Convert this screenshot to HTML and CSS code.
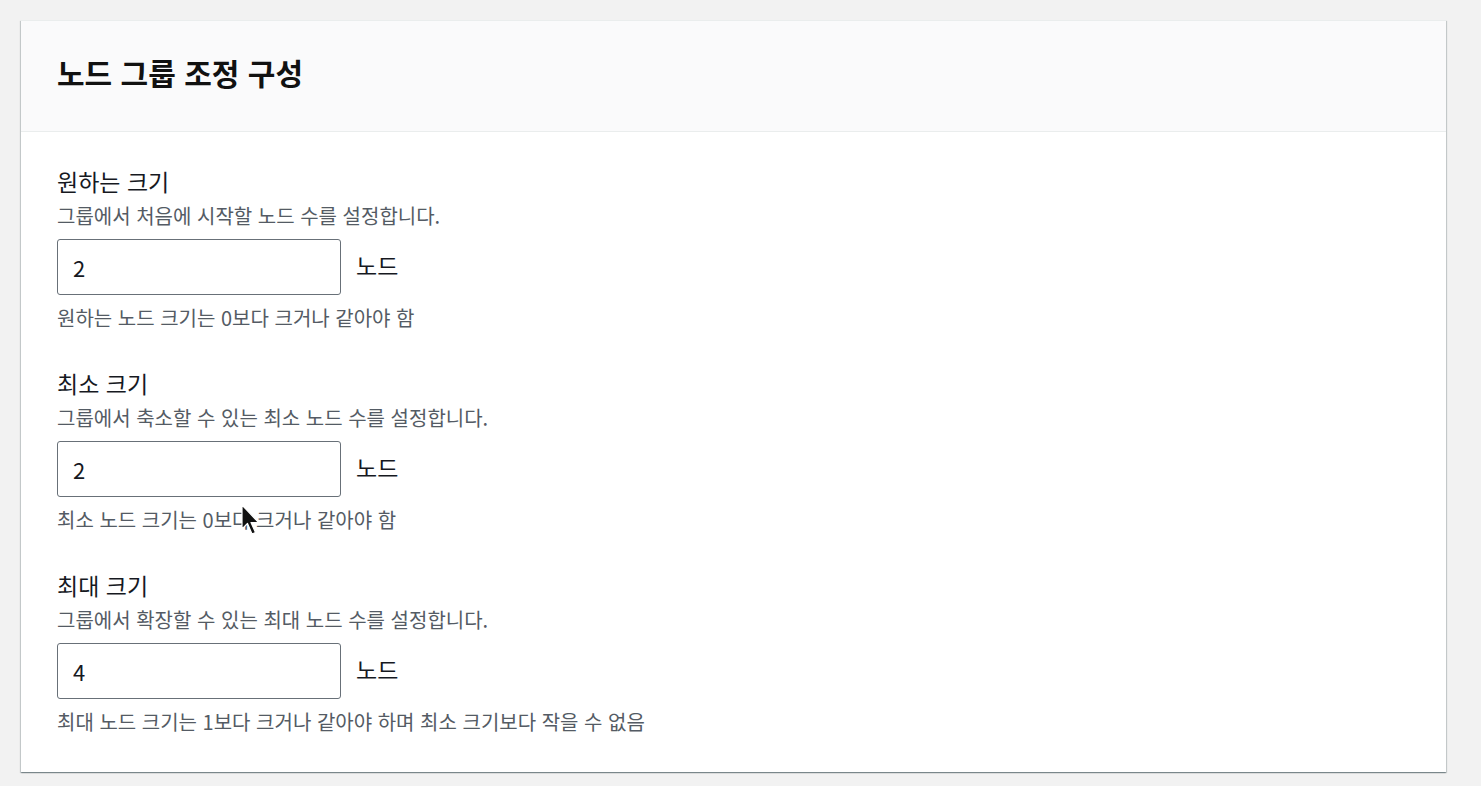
FILE: index.html
```html
<!DOCTYPE html>
<html lang="ko">
<head>
<meta charset="utf-8">
<link rel="stylesheet" href="styles.css">
<title>노드 그룹 조정 구성</title>
</head>
<body>
<div class="page">
  <section class="card">
    <header class="card-header">
      <h2 class="card-title">노드 그룹 조정 구성</h2>
    </header>
    <div class="card-body">
      <div class="field">
        <div class="label">원하는 크기</div>
        <div class="desc">그룹에서 처음에 시작할 노드 수를 설정합니다.</div>
        <div class="control">
          <input class="input" type="text" value="2">
          <span class="unit">노드</span>
        </div>
        <div class="hint">원하는 노드 크기는 0보다 크거나 같아야 함</div>
      </div>
      <div class="field">
        <div class="label">최소 크기</div>
        <div class="desc">그룹에서 축소할 수 있는 최소 노드 수를 설정합니다.</div>
        <div class="control">
          <input class="input" type="text" value="2">
          <span class="unit">노드</span>
        </div>
        <div class="hint">최소 노드 크기는 0보다 크거나 같아야 함</div>
      </div>
      <div class="field">
        <div class="label">최대 크기</div>
        <div class="desc">그룹에서 확장할 수 있는 최대 노드 수를 설정합니다.</div>
        <div class="control">
          <input class="input" type="text" value="4">
          <span class="unit">노드</span>
        </div>
        <div class="hint">최대 노드 크기는 1보다 크거나 같아야 하며 최소 크기보다 작을 수 없음</div>
      </div>
    </div>
  </section>
  <svg class="cursor" width="20" height="34" viewBox="0 0 20 34" aria-hidden="true">
    <path d="M1 1 L1 25 L6.5 19.5 L11 30 L14.5 28.5 L10 18.5 L17.5 18.5 Z" fill="#111" stroke="#fff" stroke-width="1.2" stroke-linejoin="round"/>
  </svg>
</div>
</body>
</html>
```

FILE: styles.css
```css
* { box-sizing: border-box; }
html, body { margin: 0; padding: 0; }
body {
  background: #f2f2f2;
  font-family: "Noto Sans CJK KR", "Noto Sans", sans-serif;
  color: #16191f;
}
.page {
  position: relative;
  padding: 20px 35px 14px 21px;
}
.card {
  background: #fff;
  border-top: 1px solid #eaeded;
  box-shadow: 0 1px 1px 0 rgba(0, 28, 36, 0.3), 1px 1px 1px 0 rgba(0, 28, 36, 0.15), -1px 1px 1px 0 rgba(0, 28, 36, 0.15);
}
.card-header {
  background: #fafafb;
  border-bottom: 1px solid #eaeded;
  height: 111px;
  padding: 32px 36px 0;
}
.card-title {
  margin: 0;
  font-size: 30px;
  line-height: 38px;
  font-weight: 700;
  color: #111;
}
.card-body {
  padding: 35px 36px 37px;
  display: flex;
  flex-direction: column;
  gap: 38px;
}
.field {
  display: flex;
  flex-direction: column;
}
.label {
  font-size: 23px;
  line-height: 28px;
  color: #16191f;
  margin-bottom: 8px;
}
.desc {
  font-size: 20px;
  line-height: 26px;
  color: #545b64;
  margin-bottom: 10px;
}
.control {
  display: flex;
  align-items: center;
  gap: 15px;
  margin-bottom: 10px;
}
.input {
  width: 284px;
  height: 56px;
  border: 1px solid #687078;
  border-radius: 3px;
  padding: 0 15px;
  font-family: inherit;
  font-size: 22px;
  color: #16191f;
  background: #fff;
  outline: none;
}
.unit {
  font-size: 23px;
  line-height: 28px;
  color: #16191f;
  position: relative;
  top: -2px;
}
.hint {
  font-size: 20px;
  line-height: 26px;
  color: #545b64;
}
.cursor {
  position: absolute;
  left: 241px;
  top: 504px;
}
```
